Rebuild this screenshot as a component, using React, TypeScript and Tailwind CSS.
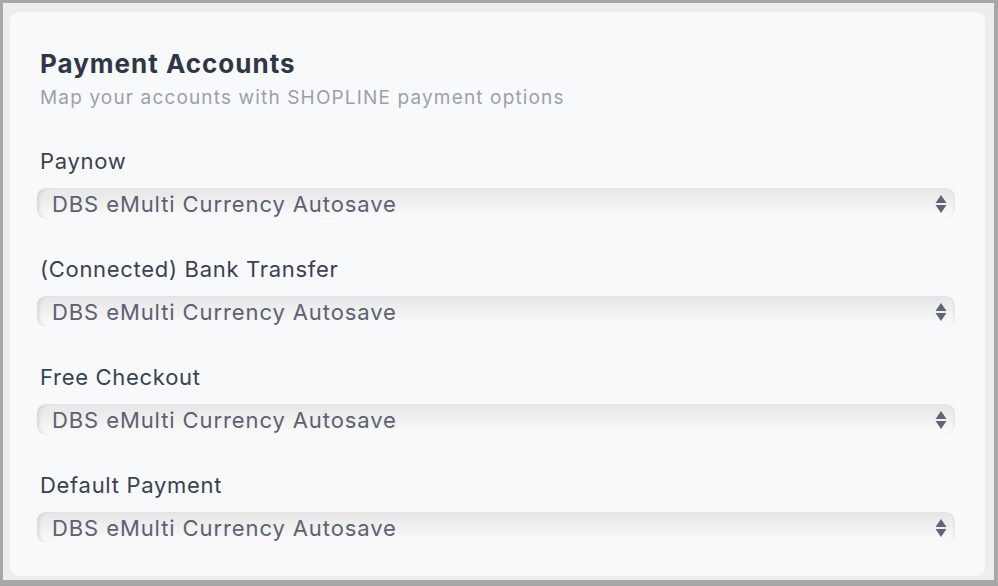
import React from 'react';

const FIELDS = ['Paynow', '(Connected) Bank Transfer', 'Free Checkout', 'Default Payment'];

function SelectBox({ value }: { value: string }) {
  return (
    <div className="relative flex h-[31px] items-center rounded-[9px] bg-[linear-gradient(to_bottom,#e6e6e7,#efeff0_45%,#f7f7f8_80%,#fbfbfc)] pl-[15px] pr-[8px] shadow-[inset_4px_0_4px_-2px_rgba(0,0,0,0.12),inset_-3px_0_3px_-2px_rgba(0,0,0,0.06)]">
      <span className="flex-1 text-[22px] leading-none tracking-[0.9px] text-[#5c6271]">{value}</span>
      <svg width="12" height="20" viewBox="0 0 12 20">
        <path d="M6 1 L11.5 9 H0.5 Z" fill="#5f6575" />
        <path d="M6 19 L11.5 11 H0.5 Z" fill="#5f6575" />
      </svg>
    </div>
  );
}

export default function App() {
  return (
    <div
      className="h-[586px] w-[998px] bg-[#a7a7a7] pb-[6px] pl-[3px] pr-[4px] pt-[3px]"
      style={{ fontFamily: 'Inter, "Noto Sans", sans-serif' }}
    >
      <div className="h-full w-full bg-[#ededee] pb-[4px] pl-[7px] pr-[9px] pt-[9px]">
        <div className="h-full rounded-[9px] bg-[#f8f9fa] pl-[30px] pr-[30px] pt-[37px]">
          <h1 className="text-[26px] font-bold leading-[30px] tracking-[1px] text-[#2f3747]">Payment Accounts</h1>
          <p className="mt-[7px] text-[19px] leading-[24px] tracking-[1.15px] text-[#9ba1ab]">
            Map your accounts with SHOPLINE payment options
          </p>
          <div className="mt-[38px] flex flex-col gap-[37px]">
            {FIELDS.map((f) => (
              <div key={f} className="-ml-[3px] flex flex-col">
                <label className="mb-[14px] ml-[3px] text-[22px] leading-[26px] tracking-[0.7px] text-[#3a4150]">{f}</label>
                <SelectBox value="DBS eMulti Currency Autosave" />
              </div>
            ))}
          </div>
        </div>
      </div>
    </div>
  );
}
